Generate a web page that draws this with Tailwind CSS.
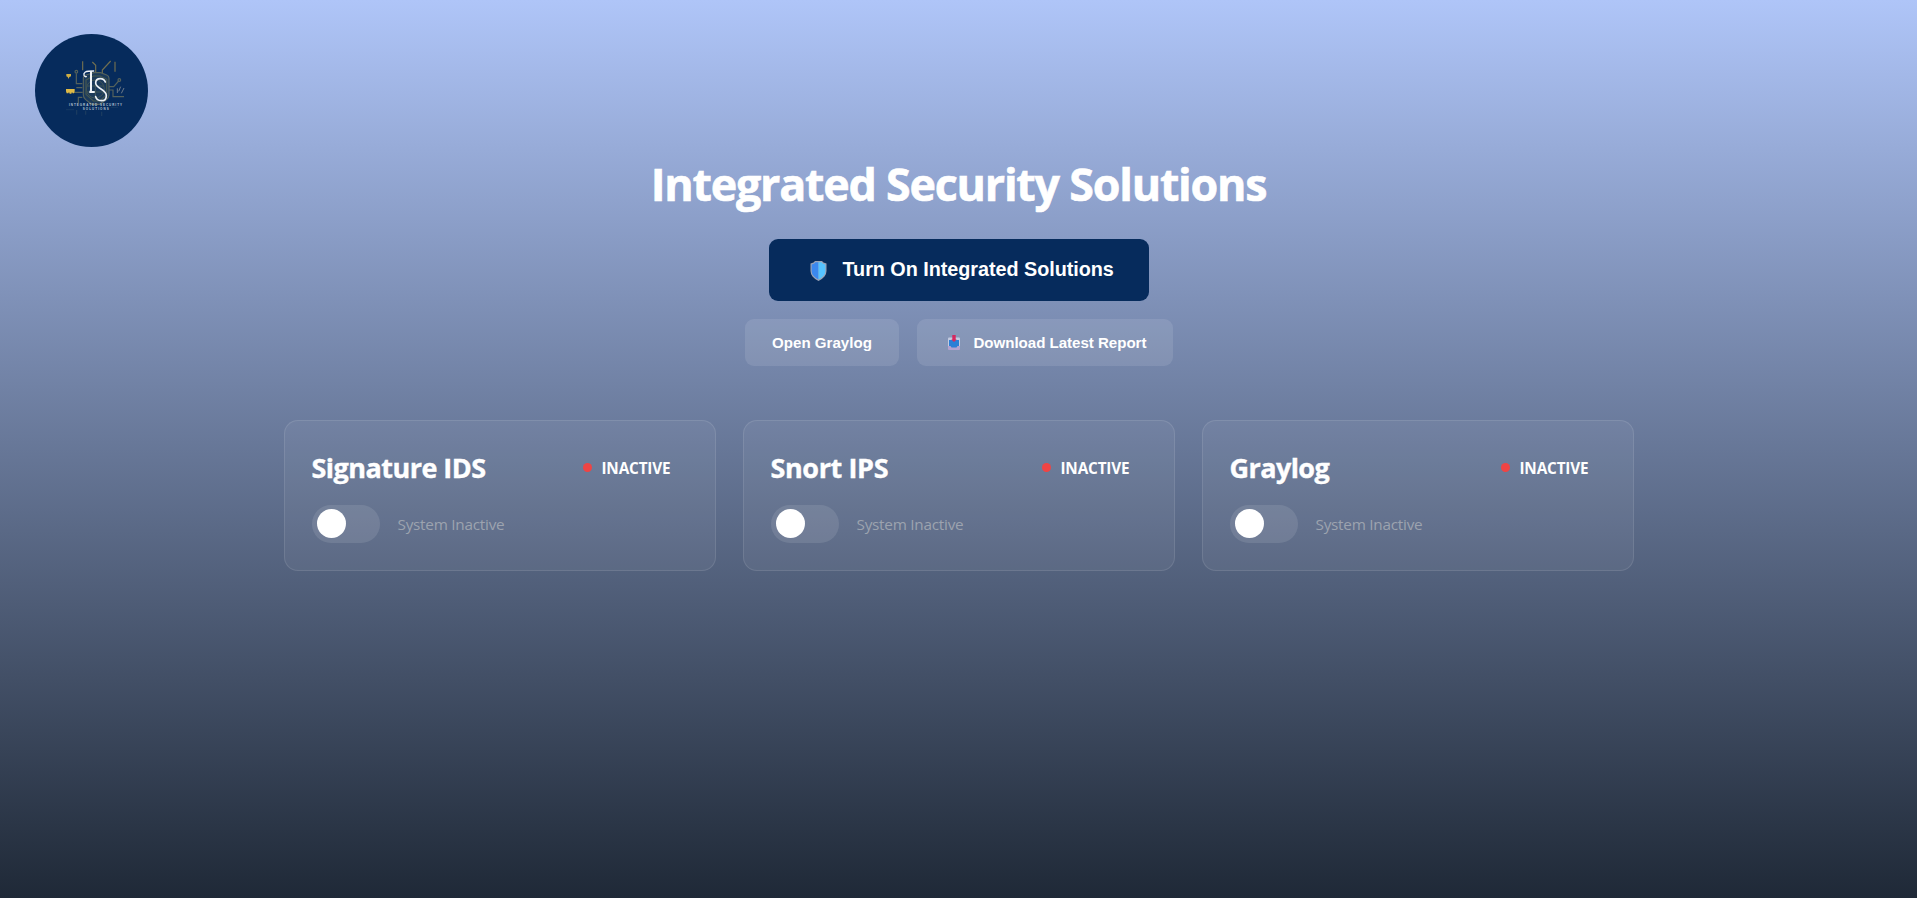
<!DOCTYPE html>
<html lang="en">
<head>
<meta charset="utf-8">
<title>Integrated Security Solutions</title>
<script src="https://cdn.jsdelivr.net/npm/@tailwindcss/browser@4"></script>
</head>
<body class="h-[898px] overflow-hidden bg-linear-to-b from-[#afc5f8] to-[#1f2937] font-['Open_Sans','Noto_Sans',sans-serif] text-white [--tw-gradient-position:to_bottom]">
  <header class="flex pt-[34px] pl-[35px]">
    <svg class="size-[113px]" viewBox="45 42 339 339" fill="none">
      <circle cx="214.500" cy="211.500" r="169.500" fill="#062b5c"/>
      <g stroke="#55625c" stroke-width="3.500">
        <path d="M188 124v27M285 125v30" stroke="#716f50"/>
        <path d="M217 126l10 10v24M272 123l-25 27v12" stroke="#716f50"/>
        <circle cx="169" cy="155" r="4"/>
        <path d="M169 160v31h18M187 203h-18M160 217h28M187 232h-12v18"/>
        <path d="M190 175q0-8 8-10l24-7h20l18 7q7 3 7 10v50q0 8-8 14l-20 14h-24l-18-14q-7-6-7-14z" fill="#1b3a5b"/>
        <path d="M198 180l22-12h20l20 10v45l-20 20h-20l-22-20z" stroke="#46584f"/>
        <path d="M267 200h14l15-17M267 210h12v20h33" />
        <circle cx="298" cy="180" r="4"/>
        <path d="M302 200l-6 14M312 204l-8 16M292 205v14" stroke="#6d7a8a" stroke-width="3"/>
        <path d="M170 270v14M197 272v12M245 275v13" stroke="#1d3d60"/>
        <path d="M138 269h24M272 262h22" stroke="#123661"/>
      </g>
      <g stroke="#3f5457" stroke-width="3"><circle cx="226" cy="207" r="27"/><path d="M200 198h52M200 216h52M226 180v54"/></g>
      <path d="M139 162h14v7l-5 2-2 6-3-6-4-2z" fill="#cfae43"/>
      <path d="M138 207h26v7l-2 6h-4l-2-4-2 5h-5l-2-5-2 4h-5l-2-6z" fill="#dfba46"/>
      <g stroke="#eef2f7" stroke-linecap="round">
        <path d="M213 155v56q0 5-5 5h14" stroke-width="6"/>
        <path d="M221 153q-19 0-25 3-6 4-4 10 2 5 7 4" stroke-width="4"/>
        <path d="M256 186q-4-10-15-10-14 0-14 13 0 8 16 18 16 10 16 20 0 15-15 15-14 0-17-12" stroke-width="5"/>
      </g>
      <g fill="#b9c5d6" font-family="Liberation Sans" font-weight="700" font-size="9">
        <text x="147" y="257" textLength="159">INTEGRATED SECURITY</text>
        <text x="188" y="269" textLength="78">SOLUTIONS</text>
      </g>
    </svg>
  </header>

  <main class="mx-auto flex w-[1350px] flex-col items-center">
    <h1 class="mt-[9px] text-[44.8px] leading-14 font-bold tracking-[-1.22px] [-webkit-text-stroke:0.6px_white]">Integrated Security Solutions</h1>

    <button class="mt-[27px] flex h-[62px] w-[380px] items-center rounded-[9px] bg-[#062b5c] pb-px pl-10 font-['Liberation_Sans',Arial,sans-serif] text-[19.8px] font-bold tracking-[-0.03px]">
      <svg class="mt-[3px] mr-4 ml-px h-5 w-[17px]" viewBox="0 0 17 20">
        <path d="M5 0h7l1.500 1.500 3 1V10q0 3-2 5.500T8.500 20Q4.500 18 2.500 15.500T.5 10V2.500l3-1z" fill="#9ba3b6"/>
        <path d="M8.500 1.200H5.500L4 2.700l-2.300.8V10q0 2.700 1.800 4.800t5 3.800z" fill="#3b88ee"/>
        <path d="M8.500 1.200h3L13 2.700l2.300.8V10q0 2.700-1.800 4.800t-5 3.800z" fill="#55c3ff"/>
      </svg>
      <span>Turn On Integrated Solutions</span>
    </button>

    <div class="mt-[18px] flex gap-[18px] font-['Liberation_Sans',Arial,sans-serif] text-[15.1px] font-bold">
      <button class="h-[47px] w-[154px] rounded-[9px] bg-white/10 pt-px pl-px">Open Graylog</button>
      <button class="flex h-[47px] w-[256px] items-center rounded-[9px] bg-white/10 pt-px pl-[31px] tracking-[-0.03px]">
        <svg class="-mt-px mr-[14px] h-[15px] w-3" viewBox="0 0 12 15">
          <path d="M0 3.500q0-1 1-1h10q1 0 1 1V12H0z" fill="#c3cbe0"/>
          <path d="M0 11h12v3q0 1-1 1H1q-1 0-1-1z" fill="#b3a2cf"/>
          <path d="M1 5h10v6H9.500l-1 1.500h-5L2.500 11H1z" fill="#2b7fd6"/>
          <path d="M4.300 0h3.400v4.500h1L6 7 3.300 4.500h1z" fill="#d6295f"/>
        </svg>
        <span>Download Latest Report</span>
      </button>
    </div>

    <div class="mt-[54px] grid w-full grid-cols-3 gap-[27px]">
      <section class="h-[151px] rounded-[14px] border border-white/10 bg-white/5 p-[27px]">
        <div class="flex h-[39px] items-center justify-between pr-[17px]">
          <h2 class="text-[27px] leading-[39px] font-bold tracking-[-0.53px] [-webkit-text-stroke:0.4px_white]">Signature IDS</h2>
          <div class="flex items-center gap-[9px] text-[15.3px] font-bold tracking-[-0.15px]"><span class="size-[9px] rounded-full bg-[#ef4444]"></span><span class="pt-[2px]">INACTIVE</span></div>
        </div>
        <div class="mt-[18px] flex items-center gap-[18px]">
          <div class="flex h-[38px] w-[68px] items-center rounded-full bg-white/10 pb-px pl-[5px]"><span class="size-[29px] rounded-full bg-white"></span></div>
          <span class="text-[15.3px] tracking-[-0.24px] text-[#9ca3af]">System Inactive</span>
        </div>
      </section>
      <section class="h-[151px] rounded-[14px] border border-white/10 bg-white/5 p-[27px]">
        <div class="flex h-[39px] items-center justify-between pr-[17px]">
          <h2 class="text-[27px] leading-[39px] font-bold tracking-[-0.38px] [-webkit-text-stroke:0.4px_white]">Snort IPS</h2>
          <div class="flex items-center gap-[9px] text-[15.3px] font-bold tracking-[-0.15px]"><span class="size-[9px] rounded-full bg-[#ef4444]"></span><span class="pt-[2px]">INACTIVE</span></div>
        </div>
        <div class="mt-[18px] flex items-center gap-[18px]">
          <div class="flex h-[38px] w-[68px] items-center rounded-full bg-white/10 pb-px pl-[5px]"><span class="size-[29px] rounded-full bg-white"></span></div>
          <span class="text-[15.3px] tracking-[-0.24px] text-[#9ca3af]">System Inactive</span>
        </div>
      </section>
      <section class="h-[151px] rounded-[14px] border border-white/10 bg-white/5 p-[27px]">
        <div class="flex h-[39px] items-center justify-between pr-[17px]">
          <h2 class="text-[27px] leading-[39px] font-bold tracking-[-0.58px] [-webkit-text-stroke:0.4px_white]">Graylog</h2>
          <div class="flex items-center gap-[9px] text-[15.3px] font-bold tracking-[-0.15px]"><span class="size-[9px] rounded-full bg-[#ef4444]"></span><span class="pt-[2px]">INACTIVE</span></div>
        </div>
        <div class="mt-[18px] flex items-center gap-[18px]">
          <div class="flex h-[38px] w-[68px] items-center rounded-full bg-white/10 pb-px pl-[5px]"><span class="size-[29px] rounded-full bg-white"></span></div>
          <span class="text-[15.3px] tracking-[-0.24px] text-[#9ca3af]">System Inactive</span>
        </div>
      </section>
    </div>
  </main>
</body>
</html>
